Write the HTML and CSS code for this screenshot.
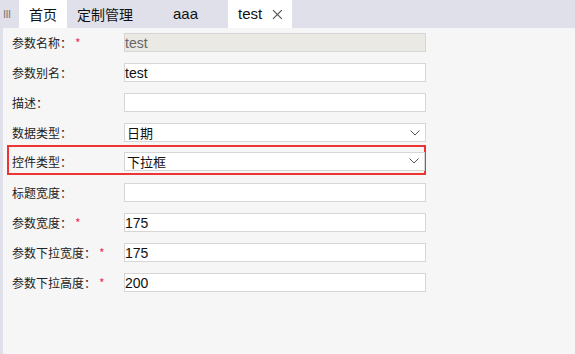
FILE: index.html
```html
<!DOCTYPE html>
<html lang="zh-CN">

<head>
    <meta charset="UTF-8">
    <title>定制管理</title>
    <link rel="stylesheet" href="styles.css">
</head>

<body>
    <div class="tabs">
        <span class="menu">III</span>
        <div class="tab active">首页</div>
        <div class="tab">定制管理</div>
        <div class="tab wide">aaa</div>
        <div class="tab active">test
            <svg class="close" width="11" height="11" viewBox="0 0 11 11">
                <path d="M1 1L10 10M10 1L1 10" stroke="#555" stroke-width="1.2" fill="none" />
            </svg>
        </div>
    </div>

    <div class="main">
        <div class="form">
            <div class="row">
                <label>参数名称：<i>*</i></label>
                <input class="field" value="test" disabled>
            </div>
            <div class="row">
                <label>参数别名：</label>
                <input class="field" value="test">
            </div>
            <div class="row">
                <label>描述：</label>
                <input class="field" value="">
            </div>
            <div class="row">
                <label>数据类型：</label>
                <div class="field select">日期
                    <svg width="10" height="6" viewBox="0 0 10 6"><path d="M0.5 0.5L5 5L9.5 0.5" stroke="#555" fill="none" /></svg>
                </div>
            </div>
            <div class="row highlight">
                <label>控件类型：</label>
                <div class="field select">下拉框
                    <svg width="10" height="6" viewBox="0 0 10 6"><path d="M0.5 0.5L5 5L9.5 0.5" stroke="#555" fill="none" /></svg>
                </div>
            </div>
            <div class="row">
                <label>标题宽度：</label>
                <input class="field" value="">
            </div>
            <div class="row">
                <label>参数宽度：<i>*</i></label>
                <input class="field" value="175">
            </div>
            <div class="row">
                <label>参数下拉宽度：<i>*</i></label>
                <input class="field" value="175">
            </div>
            <div class="row">
                <label>参数下拉高度：<i>*</i></label>
                <input class="field" value="200">
            </div>
        </div>
    </div>
</body>

</html>
```

FILE: styles.css
```css
* {
    box-sizing: border-box;
    margin: 0;
    padding: 0;
}

body {
    font-family: "Noto Sans CJK SC", "Liberation Sans", sans-serif;
    background: #f6f6f6;
    color: #222;
    height: 100vh;
    display: flex;
    flex-direction: column;
}

.tabs {
    height: 28px;
    background: #e0e0eb;
    display: flex;
    align-items: stretch;
    font-size: 14px;
}

.menu {
    width: 19px;
    padding-left: 3px;
    color: #777;
    font-family: "Liberation Sans", sans-serif;
    font-size: 11px;
    line-height: 28px;
    letter-spacing: -0.5px;
}

.tab {
    padding: 0 10px;
    line-height: 28px;
    color: #111;
    display: flex;
    align-items: center;
}

.tab.wide {
    padding: 0 30px;
    font-family: "Liberation Sans", sans-serif;
    font-size: 15px;
}

.tab.active {
    background: #fff;
}

.tab.active:last-child {
    padding: 0 9px 0 10px;
    width: 64px;
    font-family: "Liberation Sans", sans-serif;
    font-size: 15px;
}

.close {
    margin-left: 10px;
}

.main {
    flex: 1;
    border-left: 3px solid #e0e0eb;
}

.form {
    padding-left: 4px;
}

.row {
    width: 419px;
    height: 30px;
    padding-left: 5px;
    padding-bottom: 1px;
    display: flex;
    align-items: center;
}

.row label {
    width: 112px;
    font-size: 12px;
    color: #222;
}

.row label i {
    font-style: normal;
    color: #f0305a;
    margin-left: 3px;
}

.field {
    flex: 1;
    height: 19px;
    border: 1px solid #d6d6d6;
    background: #fff;
    font-family: "Liberation Sans", sans-serif;
    font-size: 14px;
    color: #111;
    padding: 0;
    outline: none;
}

.field:disabled {
    background: #ebe9e3;
    color: #666;
}

.select {
    display: flex;
    align-items: center;
    justify-content: space-between;
    padding: 0 5px 0 2px;
    font-family: "Noto Sans CJK SC", sans-serif;
    font-size: 13px;
    line-height: 17px;
}

.highlight {
    border: 2px solid #ee3535;
    padding: 2px 0 0 3px;
    margin-top: -3px;
    margin-bottom: 3px;
}

.highlight .field {
    margin-right: -1px;
}
```
